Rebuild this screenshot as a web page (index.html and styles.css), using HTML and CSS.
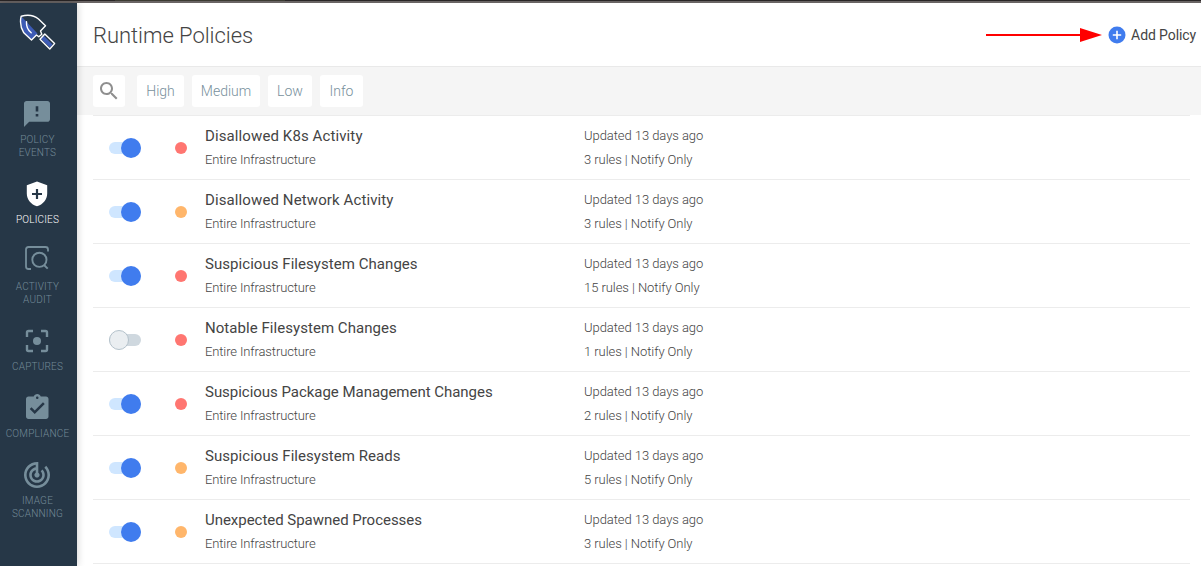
FILE: index.html
```html
<!DOCTYPE html>
<html lang="en">
<head>
<meta charset="utf-8">
<title>Runtime Policies</title>
<link rel="stylesheet" href="styles.css">
</head>
<body>
<div class="window-edge"><div class="window-tab"></div></div>
<div class="app">
  <nav class="sidebar">
    <svg class="logo" viewBox="0 0 40 40" width="40" height="40">
      <path d="M2.500 3.500 18.500 20.500 12.500 26.500 5 19.500Q1 12 2.500 3.500Z" fill="#3d5bb5"/>
      <path d="M24.500 22.500 33.500 31.500 31 34.500 21.800 25.800Z" fill="#3d5bb5"/>
      <path d="M2.200 3.200Q13 .5 19.500 6L26.500 12.800 21.500 18 22.800 21.200 19.800 23.800 17.500 22 12.500 27 4.800 19.800Q0 12 2.200 3.200Z" fill="none" stroke="#fff" stroke-width="1.400" stroke-linejoin="round"/>
      <path d="M25.800 21 35.600 30.600 30.800 36 21 26.200Z" fill="none" stroke="#fff" stroke-width="1.400" stroke-linejoin="round"/>
      <path d="M7.500 8.800Q7 15.500 12.200 19.800" fill="none" stroke="#fff" stroke-width="1.400" stroke-linecap="round"/>
    </svg>
    <a class="nav-item">
      <svg class="nav-icon" viewBox="-.3 -.3 24.6 24.6"><path d="M20 2H4c-1.1 0-2 .9-2 2v18l4-4h14c1.100 0 2-.9 2-2V4c0-1.100-.9-2-2-2zm-7 12h-2v-2h2v2zm0-4h-2V6h2v4z"/></svg>
      <span>POLICY<br>EVENTS</span>
    </a>
    <a class="nav-item active">
      <svg class="nav-icon" viewBox="0 0 32 32"><path fill-rule="evenodd" d="M16 3.600 5.800 7.300V15.500C5.800 21.500 10 26.600 16 28.300 22 26.600 26.200 21.500 26.200 15.500V7.300ZM14.900 11h2.200v3.900H21v2.200h-3.900V21h-2.200v-3.900H11v-2.200h3.900Z"/></svg>
      <span>POLICIES</span>
    </a>
    <a class="nav-item">
      <svg class="nav-icon line" viewBox="0 0 32 32"><path d="M10 24H7.500Q5 24 5 21.500V4.500Q5 2 7.500 2H24.500Q27 2 27 4.500V6.500" stroke-width="1.800"/><circle cx="18.400" cy="14.800" r="7.100" stroke-width="1.900"/><path d="M23 20 26.700 23.700" stroke-width="1.900"/></svg>
      <span>ACTIVITY<br>AUDIT</span>
    </a>
    <a class="nav-item">
      <svg class="nav-icon line" viewBox="0 0 32 32"><path d="M6 12V7.500Q6 6 7.500 6H12M20 6h4.500Q26 6 26 7.500V12M26 20v4.500Q26 26 24.500 26H20M12 26H7.500Q6 26 6 24.500V20" stroke-width="2.400"/><circle class="solid" cx="16" cy="16" r="4"/></svg>
      <span>CAPTURES</span>
    </a>
    <a class="nav-item">
      <svg class="nav-icon" viewBox="-1 -.6 25.6 25.600"><path d="M19 3h-4.180C14.400 1.840 13.300 1 12 1c-1.300 0-2.400.84-2.820 2H5c-1.100 0-2 .9-2 2v14c0 1.100.9 2 2 2h14c1.100 0 2-.9 2-2V5c0-1.100-.9-2-2-2zm-7 0c.55 0 1 .45 1 1s-.45 1-1 1-1-.45-1-1 .45-1 1-1zm-2 14l-4-4 1.410-1.410L10 14.170l6.590-6.590L18 9l-8 8z"/></svg>
      <span>COMPLIANCE</span>
    </a>
    <a class="nav-item">
      <svg class="nav-icon" viewBox="-.3 -.3 24.6 24.6"><path d="M19.070 4.930l-1.410 1.410C19.100 7.790 20 9.790 20 12c0 4.420-3.580 8-8 8s-8-3.580-8-8c0-4.080 3.050-7.440 7-7.930v2.020C8.160 6.570 6 9.030 6 12c0 3.310 2.690 6 6 6s6-2.690 6-6c0-1.660-.67-3.160-1.760-4.240l-1.410 1.410C15.550 9.900 16 10.900 16 12c0 2.210-1.790 4-4 4s-4-1.790-4-4c0-1.860 1.280-3.410 3-3.860v2.140c-.6.350-1 .98-1 1.720 0 1.100.9 2 2 2s2-.9 2-2c0-.74-.4-1.380-1-1.720V2h-1C6.480 2 2 6.480 2 12s4.480 10 10 10 10-4.480 10-10c0-2.760-1.120-5.260-2.930-7.070z"/></svg>
      <span>IMAGE<br>SCANNING</span>
    </a>
  </nav>
  <main class="main">
    <header class="header">
      <h1>Runtime Policies</h1>
      <div class="header-action">
        <svg class="arrow" viewBox="0 0 116 16" width="116" height="16"><path d="M0 7h94V1l22 7-22 7V9H0Z" fill="#f00"/></svg>
        <svg class="add-icon" viewBox="0 0 18 18" width="18" height="18"><circle cx="9" cy="9" r="8.500" fill="#407cee"/><path d="M9 4.800v8.400M4.800 9h8.400" stroke="#fff" stroke-width="1.600"/></svg>
        <span>Add Policy</span>
      </div>
    </header>
    <div class="filters">
      <button class="chip search" aria-label="Search"><svg viewBox="0 0 24 24" width="24" height="24"><path d="M15.500 14h-.79l-.28-.27C15.410 12.590 16 11.110 16 9.500 16 5.910 13.090 3 9.500 3S3 5.910 3 9.500 5.910 16 9.500 16c1.610 0 3.090-.59 4.230-1.570l.27.28v.79l5 4.990L20.490 19l-4.990-5zm-6 0C7.010 14 5 11.990 5 9.500S7.010 5 9.500 5 14 7.010 14 9.500 11.990 14 9.500 14z" fill="#8f8f8f"/></svg></button>
      <button class="chip high">High</button>
      <button class="chip medium">Medium</button>
      <button class="chip low">Low</button>
      <button class="chip info">Info</button>
    </div>
    <section class="list">
      <article class="row roomy"><i class="toggle on"></i><i class="dot red"></i><div class="name"><b>Disallowed K8s Activity</b><span>Entire Infrastructure</span></div><div class="meta"><span>Updated 13 days ago</span><span>3 rules | Notify Only</span></div></article>
      <article class="row roomy"><i class="toggle on"></i><i class="dot orange"></i><div class="name"><b>Disallowed Network Activity</b><span>Entire Infrastructure</span></div><div class="meta"><span>Updated 13 days ago</span><span>3 rules | Notify Only</span></div></article>
      <article class="row"><i class="toggle on"></i><i class="dot red"></i><div class="name"><b>Suspicious Filesystem Changes</b><span>Entire Infrastructure</span></div><div class="meta"><span>Updated 13 days ago</span><span>15 rules | Notify Only</span></div></article>
      <article class="row"><i class="toggle"></i><i class="dot red"></i><div class="name"><b>Notable Filesystem Changes</b><span>Entire Infrastructure</span></div><div class="meta"><span>Updated 13 days ago</span><span>1 rules | Notify Only</span></div></article>
      <article class="row tight"><i class="toggle on"></i><i class="dot red"></i><div class="name"><b>Suspicious Package Management Changes</b><span>Entire Infrastructure</span></div><div class="meta"><span>Updated 13 days ago</span><span>2 rules | Notify Only</span></div></article>
      <article class="row"><i class="toggle on"></i><i class="dot orange"></i><div class="name"><b>Suspicious Filesystem Reads</b><span>Entire Infrastructure</span></div><div class="meta"><span>Updated 13 days ago</span><span>5 rules | Notify Only</span></div></article>
      <article class="row tight"><i class="toggle on"></i><i class="dot orange"></i><div class="name"><b>Unexpected Spawned Processes</b><span>Entire Infrastructure</span></div><div class="meta"><span>Updated 13 days ago</span><span>3 rules | Notify Only</span></div></article>
    </section>
  </main>
</div>
</body>
</html>
```
FILE: styles.css
```css
*, *::before, *::after { box-sizing: border-box; }
body {
  margin: 0;
  height: 566px;
  overflow: hidden;
  background: #fff;
  color: #444;
  font-family: Roboto, "Liberation Sans", sans-serif;
  display: flex;
  flex-direction: column;
}
.window-edge { flex: none; height: 3px; background: #696464; border-top: 1px solid #292526; }
.window-tab { width: 170px; height: 1px; margin: -1px 0 0 115px; background: #3b3a32; }
.app { flex: 1; display: flex; min-height: 0; }

.sidebar {
  flex: none;
  width: 77px;
  padding-top: 10px;
  background: #263747;
  box-shadow: 0 0 8px rgba(0, 0, 0, .2);
  display: flex;
  flex-direction: column;
  align-items: center;
  z-index: 1;
}
.logo { flex: none; margin: 0 0 45px 1px; }
.nav-item {
  flex: none;
  width: 74px;
  margin-right: 3px;
  padding-bottom: 19px;
  display: flex;
  flex-direction: column;
  align-items: center;
  gap: 3px;
  color: #738a97;
  font-size: 10px;
  font-weight: 300;
  line-height: 13px;
  letter-spacing: .2px;
  text-align: center;
}
.nav-item span { margin-right: -1px; }
.nav-icon { width: 32px; height: 32px; fill: #768e9b; }
.nav-icon.line { fill: none; stroke: #768e9b; }
.nav-icon .solid { fill: #768e9b; stroke: none; }
.nav-item.active { color: #fff; }
.nav-item.active .nav-icon { fill: #fff; }

.main { flex: 1; min-width: 0; }
.header {
  height: 64px;
  padding: 0 5px 0 16px;
  border-bottom: 1px solid #e9e9e9;
  display: flex;
  align-items: center;
  justify-content: space-between;
}
h1 { margin: 0; padding-top: 2px; font-size: 22px; font-weight: 300; line-height: 28px; letter-spacing: -.05px; }
.header-action { display: flex; align-items: center; font-size: 14px; letter-spacing: -.1px; }
.arrow { margin-right: 6px; }
.add-icon { margin-right: 5px; }

.filters {
  height: 48px;
  padding: 8px 16px;
  background: #f5f5f5;
  display: flex;
  gap: 8px;
}
.chip {
  height: 32px;
  padding: 0;
  border: 0;
  border-radius: 3px;
  background: #fff;
  color: #78909c;
  font: 300 14px Roboto, sans-serif;
  display: flex;
  align-items: center;
  justify-content: center;
}
.search { width: 32px; margin-right: 4px; }
.high { width: 47px; }
.medium { width: 68px; }
.low { width: 44px; }
.info { width: 43px; }

.list { margin: 0 11px 0 16px; border-top: 1px solid #ececec; }
.row {
  height: 64px;
  padding-left: 16px;
  border-bottom: 1px solid #ececec;
  display: flex;
  align-items: center;
}
.toggle {
  width: 32px;
  height: 20px;
  margin-right: 34px;
  display: flex;
  align-items: center;
}
.toggle::before { content: ""; flex: none; width: 32px; height: 12px; border-radius: 6px; background: #cfd8df; }
.toggle::after {
  content: "";
  flex: none;
  width: 20px;
  height: 20px;
  margin-left: -32px;
  border: 1px solid #b4c2cb;
  border-radius: 50%;
  background: #eaeef1;
}
.toggle.on::before { background: #cfe6ff; }
.toggle.on::after { margin-left: -20px; border: 0; background: #407cee; }
.dot { width: 12px; height: 12px; margin-right: 18px; border-radius: 50%; }
.red { background: #ff7671; }
.orange { background: #ffb66b; }
.name, .meta { display: flex; flex-direction: column; font-size: 13px; font-weight: 300; line-height: 24px; }
.name { width: 379px; letter-spacing: -.12px; }
.meta { letter-spacing: -.06px; }
.name b { font-size: 15px; font-weight: 400; letter-spacing: .05px; }
.roomy b { letter-spacing: .11px; }
.tight b { letter-spacing: -.03px; }
```
